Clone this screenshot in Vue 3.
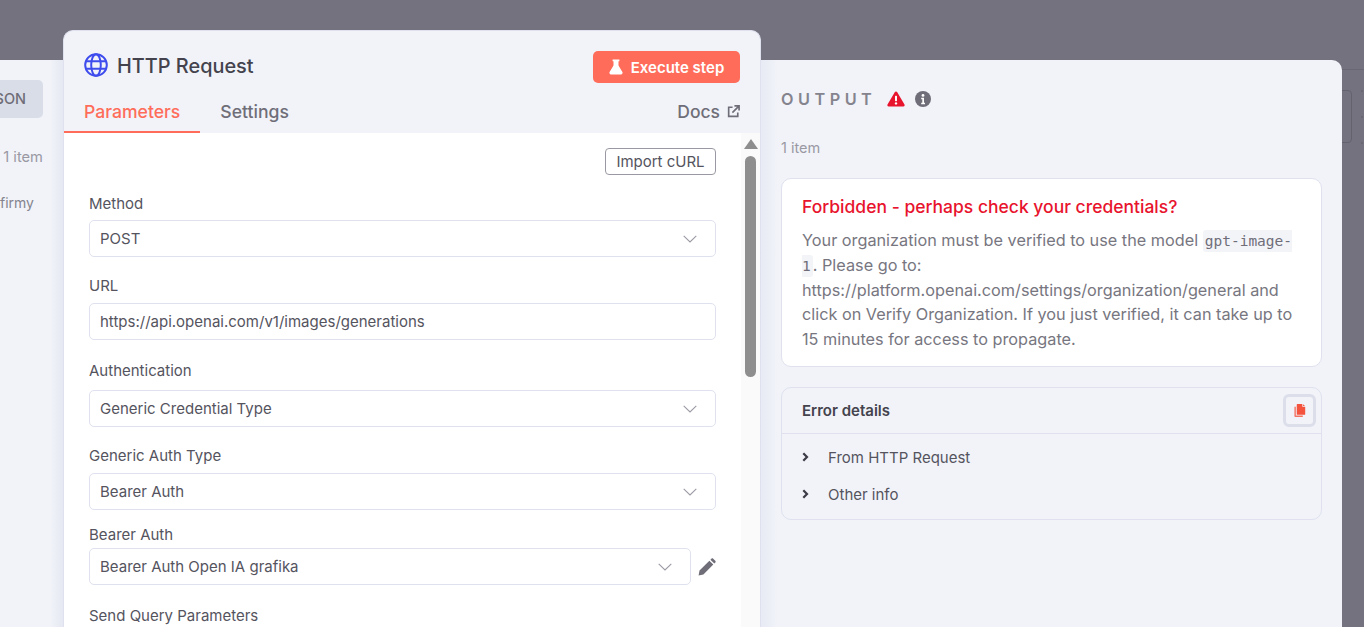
<script setup>
const fields = [
  { label: 'Method', value: 'POST', kind: 'select', cls: 'f-method' },
  { label: 'URL', value: 'https://api.openai.com/v1/images/generations', kind: 'input', cls: 'f-url' },
  { label: 'Authentication', value: 'Generic Credential Type', kind: 'select', cls: 'f-auth' },
  { label: 'Generic Auth Type', value: 'Bearer Auth', kind: 'select', cls: 'f-generic' },
]
const details = ['From HTTP Request', 'Other info']
</script>

<template>
  <div class="canvas">
    <div class="canvas-line"></div>
    <div class="canvas-box"></div>
    <div class="canvas-dots"><i></i><i></i><i></i></div>

    <div class="ndv">
      <aside class="input-panel">
        <div class="json-btn"><span>JSON</span></div>
        <div class="input-count">1 item</div>
        <div class="input-text">firmy</div>
      </aside>

      <section class="main-panel">
        <header class="node-head">
          <svg class="globe" viewBox="0 0 24 24" fill="none" stroke="#3f4ced" stroke-width="2">
            <circle cx="12" cy="12" r="10.800" />
            <ellipse cx="12" cy="12" rx="4.800" ry="10.800" />
            <path d="M2 8.200h20M2 15.800h20" />
          </svg>
          <h1 class="node-title">HTTP Request</h1>
          <button class="exec-btn">
            <svg class="flask" viewBox="0 0 14 16" fill="#fff">
              <path d="M3.600 0.600h6.800v1.700H9.500v4.100l3.900 6.600c.6 1.100-.1 2.400-1.400 2.400H2c-1.300 0-2-1.300-1.400-2.400l3.900-6.600V2.300h-.9z" />
            </svg>
            Execute step
          </button>
        </header>
        <nav class="tabs">
          <a class="tab tab-active">Parameters</a>
          <a class="tab">Settings</a>
          <a class="docs">
            Docs
            <svg viewBox="0 0 14 14" fill="none" stroke="#6f6e78" stroke-width="1.800">
              <path d="M6 2.400H1.800v9.800h9.800V8M8 1h5v5M13 1 5.800 8.200" />
            </svg>
          </a>
        </nav>

        <div class="params">
          <div class="params-body">
            <div class="import-row"><button class="import-btn">Import cURL</button></div>
            <div v-for="f in fields" :key="f.label" class="field" :class="f.cls">
              <label class="label">{{ f.label }}</label>
              <div class="control">
                <span>{{ f.value }}</span>
                <svg v-if="f.kind === 'select'" class="chev" viewBox="0 0 14 8" fill="none" stroke="#9c9ba5" stroke-width="1.100">
                  <path d="M.7.800 7 7l6.300-6.200" />
                </svg>
              </div>
            </div>
            <div class="field f-bearer">
              <label class="label">Bearer Auth</label>
              <div class="cred-row">
                <div class="control">
                  <span>Bearer Auth Open IA grafika</span>
                  <svg class="chev" viewBox="0 0 14 8" fill="none" stroke="#9c9ba5" stroke-width="1.100">
                    <path d="M.7.800 7 7l6.300-6.200" />
                  </svg>
                </div>
                <svg class="pencil" viewBox="0 0 18 18" fill="#6f6e78">
                  <path d="M0.600 17.400 1.500 12.600 11.400 2.700 15.300 6.600 5.400 16.500zM12.400 1.700l1-1c.5-.5 1.300-.5 1.800 0l2.100 2.100c.5.500.5 1.300 0 1.800l-1 1z" />
                </svg>
              </div>
            </div>
            <div class="field f-query">
              <label class="label">Send Query Parameters</label>
            </div>
          </div>
          <div class="scrollbar">
            <div class="scroll-arrow"></div>
            <div class="scroll-thumb"></div>
          </div>
        </div>
      </section>

      <section class="output-panel">
        <div class="output-head">
          <span class="output-title">OUTPUT</span>
          <svg class="warn" viewBox="0 0 18 16" fill="#e8132d">
            <path d="M9 .4c.5 0 .9.300 1.100.6l7.400 12.600c.5.900-.1 2-1.100 2H1.600c-1 0-1.600-1.100-1.100-2L7.900 1c.2-.3.6-.6 1.100-.6z" />
            <rect x="8" y="4.800" width="2" height="5.400" rx=".6" fill="#fff" />
            <circle cx="9" cy="12.400" r="1.200" fill="#fff" />
          </svg>
          <svg class="info" viewBox="0 0 16 16">
            <circle cx="8" cy="8" r="8" fill="#6f6e78" />
            <circle cx="8" cy="4.400" r="1.400" fill="#fff" />
            <path d="M6.200 6.800h2.800v5h1v1.400H6.200v-1.400h1.100V8.200H6.200z" fill="#fff" />
          </svg>
        </div>
        <div class="output-count">1 item</div>

        <div class="error-card">
          <div class="error-title">Forbidden - perhaps check your credentials?</div>
          <p class="error-msg">Your organization must be verified to use the model <code>gpt-image-1</code>. Please go to: https://platform.openai.com/settings/organization/general and click on Verify Organization. If you just verified, it can take up to 15 minutes for access to propagate.</p>
        </div>

        <div class="details-card">
          <div class="details-head">
            <span>Error details</span>
            <button class="copy-btn">
              <svg viewBox="0 0 12 14" fill="#f4533d">
                <path d="M3.200 0h5.300v2.900h3.100v8.100c0 .4-.3.700-.7.700H3.200c-.4 0-.7-.3-.7-.7V.700c0-.4.300-.7.700-.7zM9.300.2l2.100 2H9.300z" />
                <path d="M1.500 3v9.500h7.500V14H.9c-.5 0-.9-.4-.9-.9V3z" opacity=".8" />
              </svg>
            </button>
          </div>
          <div class="details-list">
            <div v-for="d in details" :key="d" class="details-row">
              <svg class="caret" viewBox="0 0 7 10" fill="none" stroke="#3d3c46" stroke-width="2.200">
                <path d="M1.300 1.200 5 5 1.300 8.800" />
              </svg>
              <span>{{ d }}</span>
            </div>
          </div>
        </div>
      </section>
    </div>
  </div>
</template>

<style>
html,
body {
  margin: 0;
  overflow: hidden;
}
</style>

<style scoped>
* {
  box-sizing: border-box;
}

.canvas {
  position: relative;
  height: 100vh;
  overflow: hidden;
  background: #74727e;
  font-family: Inter, "Liberation Sans", sans-serif;
  color: #55545e;
}

.canvas-line {
  position: absolute;
  top: 69px;
  left: 1342px;
  right: 0;
  height: 1px;
  background: #696772;
}

.canvas-box {
  position: absolute;
  top: 90px;
  left: 1320px;
  width: 32px;
  height: 53px;
  border: 1px solid #64626d;
  border-radius: 4px;
}

.canvas-dots {
  position: absolute;
  top: 90px;
  left: 1361px;
  display: flex;
  flex-direction: column;
  gap: 24px;
}

.canvas-dots i {
  width: 2px;
  height: 2px;
  background: #6a6873;
}

.ndv {
  position: relative;
  display: flex;
  align-items: flex-start;
  height: 100%;
  padding-top: 30px;
}

.input-panel {
  width: 63px;
  height: 597px;
  margin-top: 30px;
  padding-top: 20px;
  background: linear-gradient(90deg, #f1f3f9 80%, #e6e8f2);
  overflow: hidden;
}

.json-btn {
  display: flex;
  justify-content: flex-end;
  width: 43px;
  height: 38px;
  padding-right: 17px;
  border-radius: 0 5px 5px 0;
  background: #d9dde8;
  color: #6f6e78;
  font-size: 14.5px;
  font-weight: 500;
  line-height: 38px;
}

.input-count {
  width: 43px;
  margin-top: 31px;
  color: #9a99a3;
  font-size: 14.700px;
  line-height: 17px;
  text-align: right;
}

.input-text {
  width: 33px;
  margin-top: 28px;
  color: #85848e;
  font-size: 14px;
  line-height: 17px;
  text-align: right;
}

.main-panel {
  width: 698px;
  height: 597px;
  border: 1px solid #dfe2ee;
  border-bottom: 0;
  border-radius: 10px 10px 0 0;
  background: #f1f3f9;
  overflow: hidden;
}

.node-head {
  display: flex;
  align-items: center;
  padding: 20px 20px 0 20px;
  height: 52px;
}

.globe {
  width: 24px;
  height: 24px;
  margin-bottom: 4px;
}

.node-title {
  margin: 0 0 2px 9px;
  color: #44434d;
  font-size: 19.900px;
  font-weight: 500;
  line-height: 30px;
}

.exec-btn {
  display: flex;
  align-items: center;
  justify-content: center;
  gap: 8px;
  width: 147px;
  height: 32px;
  margin-left: auto;
  border: 0;
  border-radius: 5px;
  background: #ff6d5a;
  color: #fff;
  font-family: inherit;
  font-size: 15px;
  font-weight: 600;
}

.flask {
  width: 14px;
  height: 16px;
}

.tabs {
  display: flex;
  align-items: flex-end;
  height: 50px;
}

.tab {
  height: 38px;
  padding: 0 20px;
  color: #6f6e78;
  font-size: 17.600px;
  font-weight: 500;
  line-height: 34px;
}

.tab-active {
  color: #ff6d5a;
  border-bottom: 2px solid #ff6d5a;
}

.docs {
  display: flex;
  align-items: center;
  gap: 7px;
  height: 38px;
  margin-left: auto;
  padding: 0 20px 6px 0;
  color: #6f6e78;
  font-size: 17.500px;
  font-weight: 500;
}

.docs svg {
  width: 13px;
  height: 13px;
}

.params {
  display: flex;
  height: 495px;
  background: #fff;
}

.params-body {
  flex: 1;
  padding: 15px 25px 0 25px;
  min-width: 0;
}

.import-row {
  display: flex;
  justify-content: flex-end;
}

.import-btn {
  width: 111px;
  height: 27px;
  padding: 0;
  border: 1px solid #9a99a3;
  border-radius: 4px;
  background: #fff;
  color: #55545e;
  font-family: inherit;
  font-size: 15px;
}

.field {
  display: flex;
  flex-direction: column;
}

.label {
  color: #55545e;
  font-size: 15px;
  line-height: 18px;
  margin-bottom: 7px;
}

.f-method { margin-top: 20px; }
.f-url { margin-top: 20px; }
.f-auth { margin-top: 22px; }
.f-generic { margin-top: 20px; }
.f-bearer { margin-top: 16px; }
.f-query { margin-top: 22px; }

.f-url .label,
.f-generic .label { margin-bottom: 8px; }
.f-auth .label { margin-bottom: 10px; }
.f-bearer .label { margin-bottom: 4px; }

.control {
  display: flex;
  align-items: center;
  justify-content: space-between;
  height: 37px;
  padding: 0 18px 0 10px;
  border: 1px solid #dfe2ee;
  border-radius: 5px;
  background: #fff;
  color: #55545e;
  font-size: 15px;
}

.chev {
  width: 14px;
  height: 8px;
}

.cred-row {
  display: flex;
  align-items: center;
}

.cred-row .control {
  flex: 1;
}

.pencil {
  width: 18px;
  height: 18px;
  margin-left: 7px;
}

.scrollbar {
  display: flex;
  flex-direction: column;
  align-items: center;
  width: 19px;
  padding-top: 6px;
  background: #fafafa;
}

.scroll-arrow {
  width: 0;
  height: 0;
  border-left: 7px solid transparent;
  border-right: 7px solid transparent;
  border-bottom: 10px solid #8e8e8e;
}

.scroll-thumb {
  width: 11px;
  height: 221px;
  margin-top: 7px;
  border-radius: 6px;
  background: #8e8e8e;
}

.output-panel {
  width: 581px;
  height: 597px;
  margin-top: 30px;
  padding: 0 20px;
  border-radius: 0 10px 0 0;
  background: linear-gradient(90deg, #e8eaf4, #f1f3f9 16px);
}

.output-head {
  display: flex;
  align-items: center;
  height: 26px;
  margin-top: 26px;
}

.output-title {
  color: #85848e;
  font-size: 16.250px;
  font-weight: 600;
  letter-spacing: 4.500px;
}

.warn {
  width: 18px;
  height: 16px;
  margin-left: 11px;
}

.info {
  width: 16px;
  height: 16px;
  margin-left: 10px;
}

.output-count {
  margin-top: 27px;
  color: #9a99a3;
  font-size: 14.500px;
  line-height: 17px;
}

.error-card {
  margin-top: 22px;
  padding: 16px 20px 14px;
  border: 1px solid #dfe2ee;
  border-radius: 10px;
  background: #fff;
}

.error-title {
  color: #e8132d;
  font-size: 17.500px;
  font-weight: 500;
  line-height: 24px;
}

.error-msg {
  margin: 9px 0 0;
  color: #777680;
  font-size: 16.250px;
  line-height: 24.800px;
}

code {
  padding: 3px 2px;
  border-radius: 3px;
  background: #f3f4f8;
  color: #6f6e78;
  font-family: "DejaVu Sans Mono", monospace;
  font-size: 14.500px;
  line-height: 1;
}

.details-card {
  margin-top: 20px;
  border: 1px solid #dfe2ee;
  border-radius: 10px;
}

.details-head {
  display: flex;
  align-items: center;
  justify-content: space-between;
  height: 46px;
  padding: 0 5px 0 20px;
  border-bottom: 1px solid #dfe2ee;
  color: #44434d;
  font-size: 15px;
  font-weight: 600;
}

.copy-btn {
  display: flex;
  align-items: center;
  justify-content: center;
  width: 33px;
  height: 33px;
  margin-top: 1px;
  padding: 0;
  border: 3px solid #dcdfea;
  border-radius: 6px;
  background: #f1f3f9;
}

.copy-btn svg {
  width: 12px;
  height: 13px;
}

.details-list {
  padding: 5px 0 6px;
}

.details-row {
  display: flex;
  align-items: center;
  height: 37px;
  padding-left: 20px;
  color: #55545e;
  font-size: 15px;
}

.caret {
  width: 7px;
  height: 10px;
  margin-right: 19px;
}
</style>
